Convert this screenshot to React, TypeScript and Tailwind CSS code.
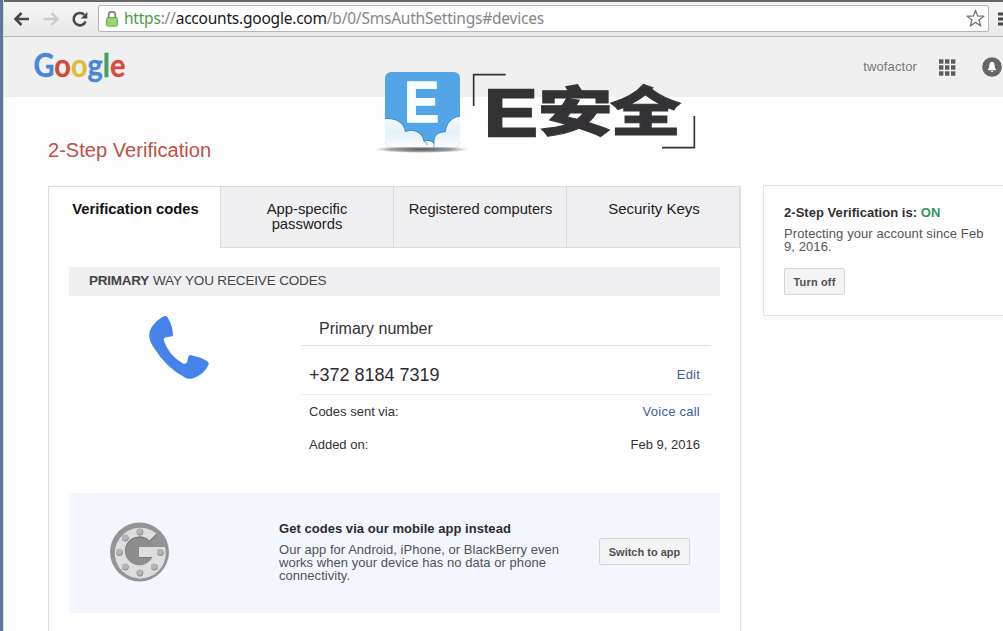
import type { ReactNode } from "react";

function BrandBanner() {
  return (
    <svg className="absolute left-[360px] top-[60px] h-[100px] w-[350px]" viewBox="0 0 1050 300" aria-label="E安全">
      <defs>
        <linearGradient id="cloud" x1="0" y1="0" x2="0" y2="1">
          <stop offset="0" stopColor="#f6fbff" />
          <stop offset="0.5" stopColor="#e6f1f9" />
          <stop offset="1" stopColor="#fbfdff" />
        </linearGradient>
        <radialGradient id="ground">
          <stop offset="0" stopColor="#555" />
          <stop offset="0.65" stopColor="#888" stopOpacity="0.8" />
          <stop offset="1" stopColor="#bbb" stopOpacity="0" />
        </radialGradient>
        <clipPath id="tile">
          <rect x="75" y="36" width="225" height="226" rx="18" />
        </clipPath>
      </defs>
      <ellipse cx="185" cy="268" rx="145" ry="11" fill="url(#ground)" />
      <g clipPath="url(#tile)">
        <rect x="75" y="36" width="225" height="226" fill="#52a5e6" />
        <path
          d="M72 176C105 172 134 188 136 215C158 204 188 216 192 244C202 239 212 241 222 249C220 226 233 216 256 215C259 190 274 171 303 168V266H72Z"
          fill="url(#cloud)"
          stroke="#3489cb"
          strokeWidth="3"
        />
        <path d="M192 244Q202 248 202 256M222 249V262" fill="none" stroke="#5ba2d4" strokeWidth="3" />
      </g>
      <text
        transform="translate(133 185) scale(0.92 1)"
        fontSize="171"
        strokeWidth="4"
        className="fill-[#f8fdff] stroke-[#f8fdff] font-['Liberation_Sans',sans-serif] font-bold"
      >
        E
      </text>
      <path d="M341 138V44H437M1003 168V263H906" fill="none" stroke="#343235" strokeWidth="5" />
      <text
        transform="translate(372 228) scale(1.2 1)"
        fontSize="201"
        strokeWidth="7"
        className="fill-[#343235] stroke-[#343235] font-['Liberation_Sans',sans-serif] font-bold"
      >
        E
      </text>
      <g strokeWidth="3" className="fill-[#343235] stroke-[#343235] font-['Noto_Sans_CJK_SC',sans-serif] font-black">
        <text transform="translate(533 214) scale(1.4 1)" fontSize="161">
          安
        </text>
        <text transform="translate(751 214) scale(1.32 1)" fontSize="161">
          全
        </text>
      </g>
    </svg>
  );
}

function Toolbar() {
  return (
    <div className="flex h-[37px] shrink-0 items-center border-b border-[#b5b5b5] border-t-2 border-t-[#68686b] bg-linear-to-b from-[#f6f6f6] to-[#e8e8e9]">
      <svg className="-mt-px ml-[9px] h-4 w-[18px] shrink-0" viewBox="0 0 18 16" fill="none" stroke="#48484a" strokeWidth="2.6">
        <path d="M16 8H3M8.5 2L2.5 8L8.5 14" />
      </svg>
      <svg className="-mt-px ml-[11px] h-4 w-[18px] shrink-0" viewBox="0 0 18 16" fill="none" stroke="#cbcbcc" strokeWidth="2.4">
        <path d="M1.5 8H15M9.5 2L15.5 8L9.5 14" />
      </svg>
      <svg className="-mt-px ml-[11px] h-[18px] w-[18px] shrink-0" viewBox="0 0 18 18">
        <path d="M14.6 11.5A6.2 6.2 0 1 1 13.3 4.8" fill="none" stroke="#48484a" strokeWidth="2.6" />
        <path d="M16.3 2V8.5H9.8Z" fill="#48484a" />
      </svg>
      <div className="-mt-px ml-[9px] flex h-[27px] w-[891px] shrink-0 items-center rounded-[2px] border border-[#b4b5b6] bg-[#fefefe]">
        <svg className="ml-[7px] h-4 w-3 shrink-0" viewBox="0 0 12 16">
          <path d="M2.7 7V4A3.3 3.3 0 0 1 9.3 4V7" fill="none" stroke="#777d78" strokeWidth="1.6" />
          <rect x="0.7" y="6.6" width="10.6" height="8.5" rx="0.7" fill="#98d675" stroke="#62aa46" />
        </svg>
        <div className="-mt-px ml-[6px] whitespace-nowrap font-['Noto_Sans',sans-serif] text-[15.5px] leading-[24px] tracking-[-0.22px] text-[#85878a]">
          <span className="text-[#4b9b48]">https</span>://<span className="text-[#171717]">accounts.google.com</span>/b/0/SmsAuthSettings#devices
        </div>
        <svg className="ml-auto mr-[3px] h-[19px] w-[19px]" viewBox="0 0 19 19" fill="#fff" stroke="#77797c" strokeWidth="1.3" strokeLinejoin="round">
          <path d="M9.5 1.2L11.6 7.1L17.9 7.2L12.9 11L14.8 17L9.5 13.4L4.2 17L6.1 11L1.1 7.2L7.4 7.1Z" />
        </svg>
      </div>
      <svg className="ml-[9px] h-4 w-4 shrink-0" viewBox="0 0 16 16" stroke="#48484a" strokeWidth="2.8">
        <path d="M0 3H16M0 8H16M0 13H16" />
      </svg>
    </div>
  );
}

function GoogleHeader() {
  return (
    <header className="flex h-[60px] shrink-0 items-center bg-[#f0f0f1]">
      <svg className="ml-[26px] h-[58px] w-[104px]" viewBox="0 0 104 58" aria-label="Google">
        <text x="3.5" y="38.5" fontSize="31.5" strokeWidth="0.3" textLength="92" lengthAdjust="spacingAndGlyphs" className="font-['Lato',sans-serif] font-bold">
          <tspan fill="#4786d8" stroke="#4786d8">G</tspan>
          <tspan fill="#cc4b3a" stroke="#cc4b3a">o</tspan>
          <tspan fill="#e5bb3a" stroke="#e5bb3a">o</tspan>
          <tspan fill="#4786d8" stroke="#4786d8">g</tspan>
          <tspan fill="#3fa25c" stroke="#3fa25c">l</tspan>
          <tspan fill="#d84a42" stroke="#d84a42">e</tspan>
        </text>
      </svg>
      <span className="ml-auto mr-[22px] text-[13px] tracking-[0.1px] text-[#77777a]">twofactor</span>
      <svg className="mr-[26px] h-[17px] w-[17px] shrink-0" viewBox="0 0 17 17" fill="#5c5c5e">
        {[0, 6, 12].map((y) => [0, 6, 12].map((x) => <rect key={`${x}-${y}`} x={x} y={y + 0.3} width="4.4" height="4.4" />))}
      </svg>
      <svg className="mr-px h-5 w-5 shrink-0" viewBox="0 0 20 20">
        <circle cx="10" cy="10" r="9.8" fill="#666668" />
        <path d="M10 4.5C7.8 5 7.3 7 7.3 9C7.3 10.7 6.8 11.5 5.8 12.5V13.3H14.2V12.5C13.2 11.5 12.7 10.7 12.7 9C12.7 7 12.2 5 10 4.5ZM9 14H11V15H9Z" fill="#fff" />
      </svg>
    </header>
  );
}

function Tab({ children, className }: { children: ReactNode; className: string }) {
  return (
    <div className={`flex h-[62px] justify-center border-t border-[#dcdcde] text-center leading-[15px] ${className}`}>
      {children}
    </div>
  );
}

const idleTab = "border-b border-r bg-[#f0f0f2] text-[#222]";

function GrayButton({ children, className }: { children: ReactNode; className: string }) {
  return (
    <button className={`h-[27px] shrink-0 whitespace-nowrap rounded-[2px] border border-[#d6d6d8] bg-[#f4f4f5] pt-px text-[11px] font-bold text-[#505052] ${className}`}>
      {children}
    </button>
  );
}

const bolts = [0, 45, 90, 135, 180, 225, 270];

function AuthenticatorIcon() {
  return (
    <svg className="ml-[41px] mt-[29px] h-[60px] w-[60px] shrink-0" viewBox="0 0 60 60">
      <circle cx="29.5" cy="30" r="29.5" fill="#949496" />
      <circle cx="29.5" cy="30" r="15" fill="#8d8d8f" />
      <path
        d="M46.5 11.5A25 25 0 1 0 54.5 27H29V35H42.5A14.5 14.5 0 1 1 39.5 18.8Z"
        transform="translate(0.5 1)"
        fill="#777779"
      />
      <path d="M46.5 11.5A25.5 25.5 0 1 0 55 25H29V35H42.5A14.5 14.5 0 1 1 39.5 18.5Z" fill="#dededf" />
      {bolts.map((angle) => {
        const radians = (angle * Math.PI) / 180;
        const x = 29.5 + 20.5 * Math.cos(radians);
        const y = 30 + 20.5 * Math.sin(radians);
        return (
          <g key={angle}>
            <circle cx={x + 0.4} cy={y + 0.6} r="3.4" fill="#8b8b8d" />
            <circle cx={x} cy={y} r="3" fill="#b5b5b7" />
          </g>
        );
      })}
    </svg>
  );
}

export default function App() {
  return (
    <div className="relative flex h-[631px] w-[1003px] overflow-hidden bg-[#fdfdfe] font-['Liberation_Sans',Arial,sans-serif] text-[#333]">
      <div className="w-[3px] shrink-0 bg-[#5e7898]" />
      <div className="flex w-[1000px] shrink-0 flex-col overflow-hidden border-l border-[#d7dce1]">
        <Toolbar />
        <GoogleHeader />
        <h1 className="ml-[44px] mt-[41px] h-[48px] text-[20px] leading-6 tracking-[0.04px] text-[#be5144]">2-Step Verification</h1>
        <main className="ml-[44px] flex items-start">
          <section className="h-[445px] w-[693px] shrink-0 border-x border-[#e0e0e2] bg-[#fefefe]">
            <nav className="flex">
              <Tab className="w-[171px] pl-[2px] pt-[15px] text-[14.8px] font-bold text-[#111]">Verification codes</Tab>
              <Tab className={`w-[174px] border-l pt-[15px] text-[14.8px] ${idleTab}`}>
                App-specific
                <br />
                passwords
              </Tab>
              <Tab className={`w-[173px] pl-px pt-[15px] text-[14.7px] ${idleTab}`}>Registered computers</Tab>
              <Tab className={`w-[173px] pl-[2px] pt-[14px] text-[15px] ${idleTab}`}>Security Keys</Tab>
            </nav>
            <div className="mx-5 mt-[19px] flex h-[29px] items-center bg-[#f0f0f2] pl-5 text-[13.5px] tracking-[-0.15px] text-[#444]">
              <b className="mr-1 tracking-[-0.25px]">PRIMARY</b> WAY YOU RECEIVE CODES
            </div>
            <div className="flex h-[197px]">
              <svg className="ml-[99px] mt-[19px] h-[65px] w-[62px] shrink-0" viewBox="264 44 186 196" fill="#4582ea">
                <path d="M308 49Q318 45 322 50Q338 75 339 104Q339 108 335 108L316 112Q310 113 311 120Q325 165 370 191Q378 192 381 187L386 168Q388 164 394 165Q425 171 443 184Q448 187 446 194Q434 222 400 235Q388 239 376 233Q320 205 278 138Q262 112 270 90Q280 66 308 49Z" />
              </svg>
              <div className="ml-[91px] mt-[14px] w-[410px] text-[13px]">
                <div className="flex h-[36px] items-center border-b border-[#e3e3e5] pl-[18px] pt-[2px] text-[16px]">Primary number</div>
                <div className="flex h-[49px] items-center justify-between border-b border-[#eeeeef] pl-2 pr-[11px] pt-[9px]">
                  <span className="pt-[2px] text-[18px] text-[#2d2d2d]">+372 8184 7319</span>
                  <a className="tracking-[0.2px] text-[#3d5f9f]">Edit</a>
                </div>
                <div className="flex h-[33px] items-center justify-between pl-2 pr-[11px]">
                  <span>Codes sent via:</span>
                  <a className="tracking-[0.25px] text-[#3d5f9f]">Voice call</a>
                </div>
                <div className="flex h-[33px] items-center justify-between pl-2 pr-[11px]">
                  <span>Added on:</span>
                  <span>Feb 9, 2016</span>
                </div>
              </div>
            </div>
            <div className="mx-5 flex h-[120px] bg-[#f4f6fe]">
              <AuthenticatorIcon />
              <div className="ml-[109px] mt-[29px] w-[290px] text-[13px] leading-[13px]">
                <div className="mb-2 whitespace-nowrap font-bold tracking-[0.04px] text-[#2b2b2e]">Get codes via our mobile app instead</div>
                <p className="whitespace-nowrap tracking-[0.04px] text-[#505256]">
                  Our app for Android, iPhone, or BlackBerry even
                  <br />
                  works when your device has no data or phone
                  <br />
                  connectivity.
                </p>
              </div>
              <GrayButton className="ml-[30px] mt-[45px] w-[91px]">Switch to app</GrayButton>
            </div>
          </section>
          <aside className="-mt-px ml-[22px] h-[131px] w-[242px] shrink-0 border border-[#e5e5e7] bg-[#fefefe] pl-5 pt-5 text-[13px] leading-[13px]">
            <div className="mb-2 font-bold tracking-[0.04px] text-[#303032]">
              2-Step Verification is: <span className="text-[#319461]">ON</span>
            </div>
            <p className="tracking-[0.09px] text-[#555558]">
              Protecting your account since Feb
              <br />
              9, 2016.
            </p>
            <GrayButton className="mt-[15px] w-[61px] tracking-[0.15px]">Turn off</GrayButton>
          </aside>
        </main>
      </div>
      <BrandBanner />
    </div>
  );
}
